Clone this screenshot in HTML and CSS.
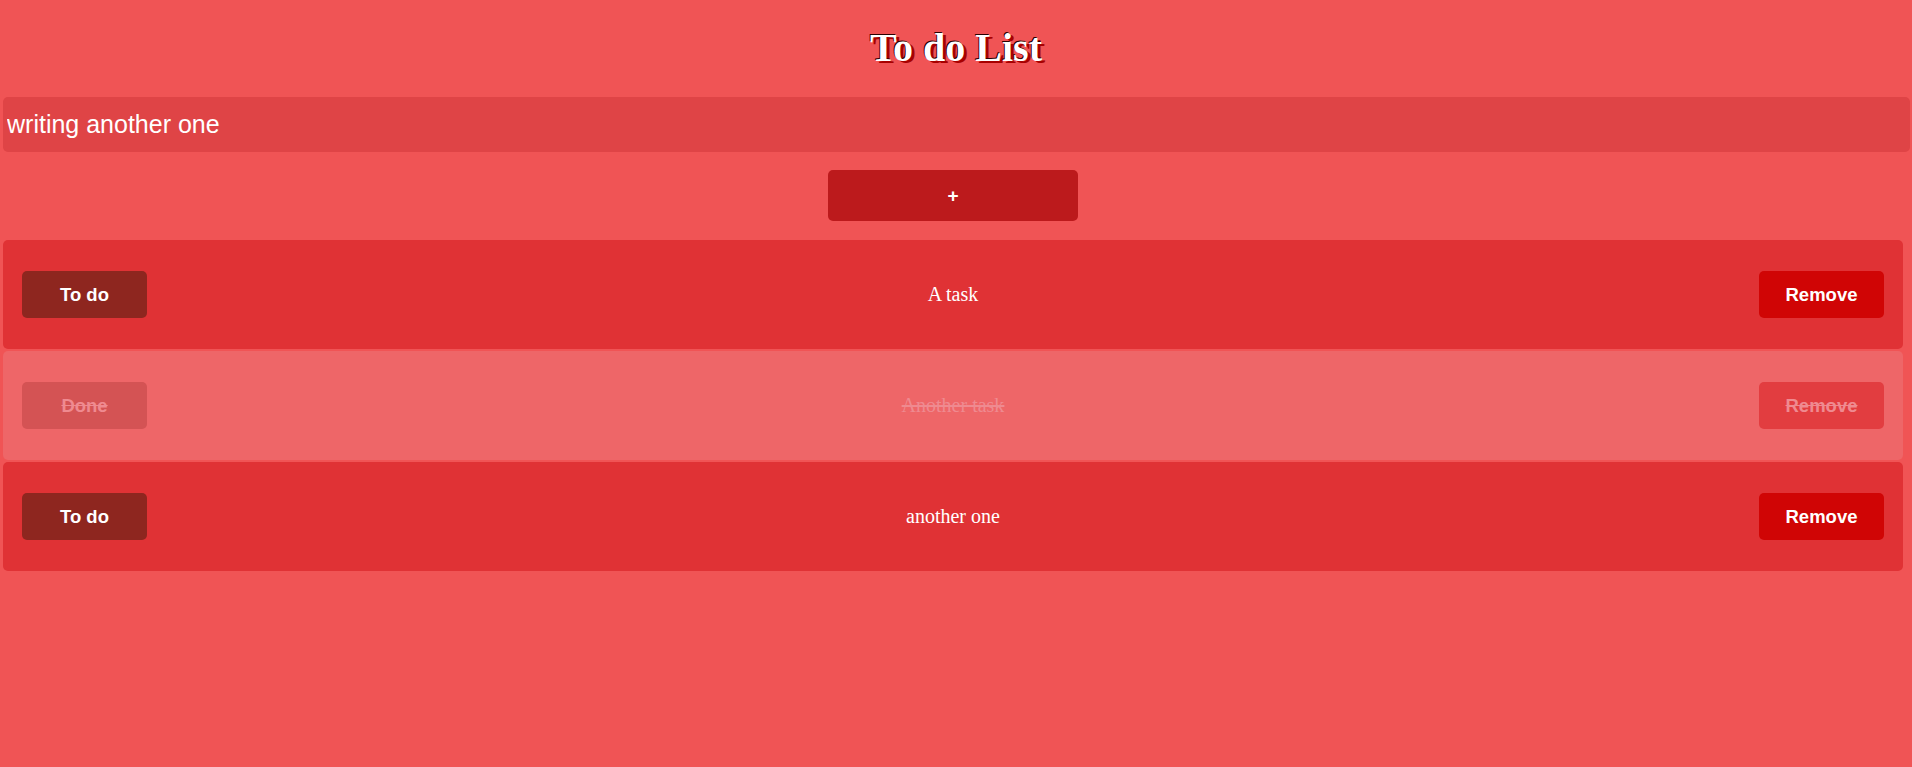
FILE: index.html
```html
<!DOCTYPE html>
<html>
<head>
<meta charset="utf-8">
<title>To do List</title>
<link rel="stylesheet" href="styles.css">
</head>
<body>
<div class="app">
  <h1 class="title">To do List</h1>
  <input class="task-input" type="text" value="writing another one">
  <div class="add-row"><button class="add-btn">+</button></div>
  <ul class="tasks">
    <li class="task">
      <button class="state-btn">To do</button>
      <span class="task-text">A task</span>
      <button class="remove-btn">Remove</button>
    </li>
    <li class="task done">
      <button class="state-btn">Done</button>
      <span class="task-text">Another task</span>
      <button class="remove-btn">Remove</button>
    </li>
    <li class="task">
      <button class="state-btn">To do</button>
      <span class="task-text">another one</span>
      <button class="remove-btn">Remove</button>
    </li>
  </ul>
</div>
</body>
</html>
```
FILE: styles.css
```css
html, body {
  margin: 0;
  padding: 0;
  background: #f05455;
  height: 100%;
}
.app {
  padding: 0 3px;
  display: flex;
  flex-direction: column;
  align-items: flex-start;
}
.title {
  align-self: stretch;
  text-align: center;
  margin: 24px 0 0;
  height: 73px;
  font-family: "Liberation Serif", serif;
  font-weight: bold;
  font-size: 40px;
  line-height: 48px;
  color: #fff;
  text-shadow: -1px -1px 0 #2a0000, 3px 2px 0 #a80000;
}
.task-input {
  box-sizing: border-box;
  width: 1907px;
  height: 55px;
  margin: 0;
  padding: 0 4px;
  border: none;
  outline: none;
  border-radius: 5px;
  background: #df4446;
  color: #fff;
  font-family: "Liberation Sans", Arial, sans-serif;
  font-size: 25px;
}
.add-row {
  align-self: stretch;
  display: flex;
  justify-content: center;
  padding: 18px 6px 19px 0;
}
.add-btn {
  width: 250px;
  height: 51px;
  border: none;
  border-radius: 5px;
  background: #bc1a1c;
  color: #fff;
  font-family: "Liberation Sans", Arial, sans-serif;
  font-weight: bold;
  font-size: 19px;
}
.tasks {
  list-style: none;
  margin: 0;
  padding: 0;
  display: flex;
  flex-direction: column;
  gap: 2px;
}
.task {
  box-sizing: border-box;
  width: 1900px;
  height: 109px;
  padding: 0 19px;
  border-radius: 5px;
  background: #e03235;
  display: flex;
  align-items: center;
  justify-content: space-between;
}
.task-text {
  font-family: "Liberation Serif", serif;
  font-size: 20px;
  color: #fff;
}
.state-btn, .remove-btn {
  width: 125px;
  height: 47px;
  border: none;
  border-radius: 5px;
  color: #fff;
  font-family: "Liberation Sans", Arial, sans-serif;
  font-weight: bold;
  font-size: 18.5px;
}
.state-btn {
  background: #8e261f;
}
.remove-btn {
  background: #d00505;
}
.task.done {
  background: #ee6668;
}
.task.done .task-text,
.task.done .state-btn,
.task.done .remove-btn {
  text-decoration: line-through;
  color: #ef8a90;
}
.task.done .state-btn {
  background: #d45354;
}
.task.done .remove-btn {
  background: #e23d40;
}
```
